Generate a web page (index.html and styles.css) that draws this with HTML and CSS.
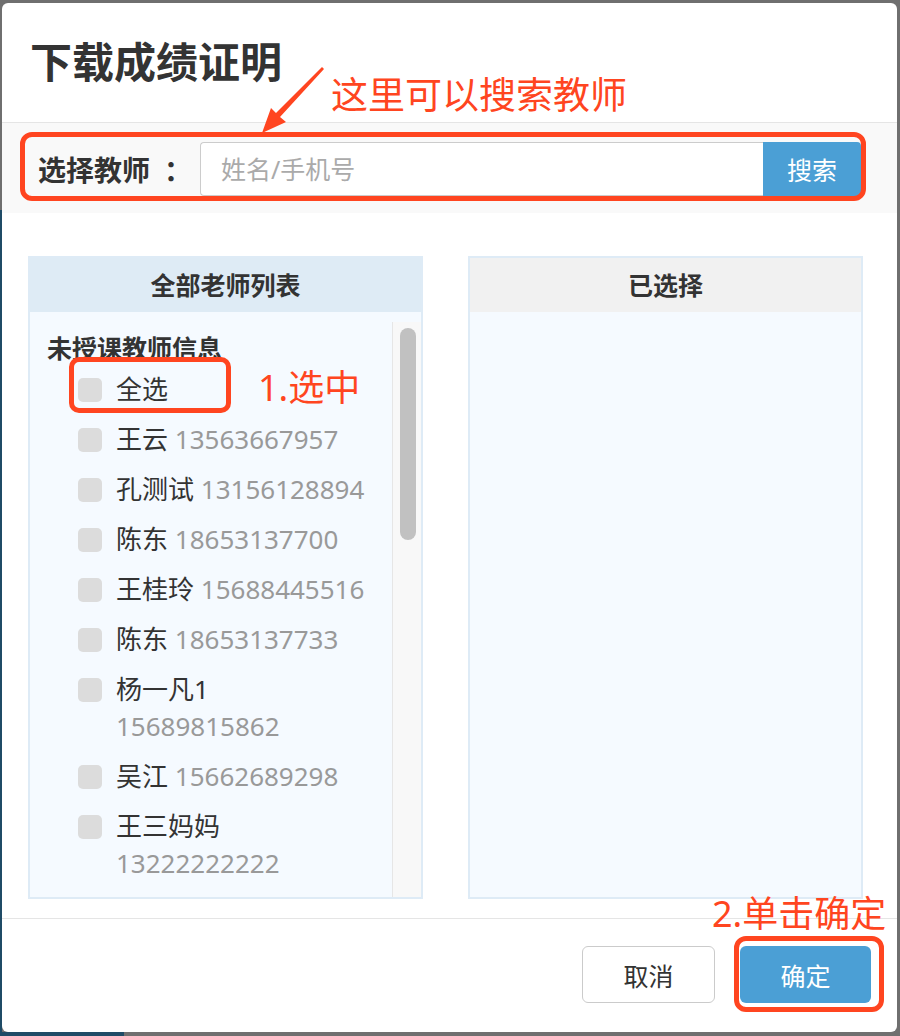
FILE: index.html
```html
<!DOCTYPE html>
<html lang="zh-CN">
<head>
    <meta charset="UTF-8">
    <title>下载成绩证明</title>
    <link rel="stylesheet" href="styles.css">
</head>
<body>

<div class="modal">
    <div class="modal-header">
        <h2 class="modal-title">下载成绩证明</h2>
    </div>

    <!-- 搜索教师 -->
    <div class="search-bar">
        <label class="search-label">选择教师<span class="colon">：</span></label>
        <input class="search-input" type="text" placeholder="姓名/手机号">
        <button class="search-btn">搜索</button>
    </div>

    <div class="modal-body">
        <div class="panel">
            <div class="panel-title">全部老师列表</div>
            <div class="panel-content">
                <div class="teacher-list">
                    <div class="group-name">未授课教师信息</div>
                    <div class="teacher"><span class="check"></span><span class="teacher-text">全选</span></div>
                    <div class="teacher"><span class="check"></span><span class="teacher-text">王云 <span class="phone">13563667957</span></span></div>
                    <div class="teacher"><span class="check"></span><span class="teacher-text">孔测试 <span class="phone">13156128894</span></span></div>
                    <div class="teacher"><span class="check"></span><span class="teacher-text">陈东 <span class="phone">18653137700</span></span></div>
                    <div class="teacher"><span class="check"></span><span class="teacher-text">王桂玲 <span class="phone">15688445516</span></span></div>
                    <div class="teacher"><span class="check"></span><span class="teacher-text">陈东 <span class="phone">18653137733</span></span></div>
                    <div class="teacher"><span class="check"></span><span class="teacher-text">杨一凡1 <span class="phone">15689815862</span></span></div>
                    <div class="teacher"><span class="check"></span><span class="teacher-text">吴江 <span class="phone">15662689298</span></span></div>
                    <div class="teacher"><span class="check"></span><span class="teacher-text">王三妈妈 <span class="phone">13222222222</span></span></div>
                </div>
                <div class="scrollbar"><div class="scroll-thumb"></div></div>
            </div>
        </div>
        <div class="panel">
            <div class="panel-title panel-title-gray">已选择</div>
            <div class="panel-content"></div>
        </div>
    </div>

    <div class="modal-footer">
        <button class="btn btn-default">取消</button>
        <button class="btn btn-primary">确定</button>
    </div>
</div>

<!-- 标注 -->
<div class="mark mark-search"></div>
<div class="mark mark-all"></div>
<div class="mark mark-ok"></div>
<div class="note note-search">这里可以搜索教师</div>
<div class="note note-step1">1.选中</div>
<div class="note note-step2">2.单击确定</div>
<svg class="mark-arrow" width="900" height="1036" viewBox="0 0 900 1036">
    <polygon fill="#ff4520" points="262,133 271,108 276,113 322,67 324,69 280,117 286,122"/>
</svg>

</body>
</html>
```

FILE: styles.css
```css
* {
    box-sizing: border-box;
}
html, body {
    margin: 0;
    height: 1036px;
    overflow: hidden;
}
body {
    padding: 3px 0 0 2px;
    font-family: "Noto Sans", "Noto Sans CJK SC", sans-serif;
    color: #333;
    /* 遮罩后面的页面 */
    background:
        linear-gradient(#1f4b66, #1f4b66) 0 1032px / 124px 4px no-repeat,
        linear-gradient(#1f4b66, #1f4b66) 0 210px / 2px 830px no-repeat,
        #6f6f6f;
}
.modal {
    width: 895px;
    height: 1029px;
    background-color: #fff;
    border-radius: 6px;
    display: flex;
    flex-direction: column;
    overflow: hidden;
}
.modal-header {
    height: 120px;
    padding: 38px 0 0 28px;
    border-bottom: 1px solid #e5e5e5;
}
.modal-title {
    margin: 0;
    font-size: 42px;
    line-height: 42px;
    font-weight: bold;
    color: #333;
}
/* 搜索栏 */
.search-bar {
    height: 90px;
    display: flex;
    align-items: center;
    padding: 2px 36px 0 36px;
    background-color: #f9f9f9;
}
.search-label {
    width: 162px;
    flex: none;
    font-size: 28px;
    font-weight: bold;
}
.colon {
    margin-left: 14px;
}
.search-input {
    flex: 1;
    height: 54px;
    padding: 0 20px;
    border: 1px solid #ccc;
    border-right: 0;
    border-radius: 4px 0 0 4px;
    font-family: inherit;
    font-size: 25px;
    outline: none;
}
.search-input::placeholder {
    color: #aaa;
}
.search-btn {
    width: 98px;
    height: 54px;
    border: 0;
    border-radius: 0 4px 4px 0;
    background-color: #4b9fd5;
    color: #fff;
    font-family: inherit;
    font-size: 25px;
}
/* 两个列表 */
.modal-body {
    height: 705px;
    display: flex;
    gap: 45px;
    padding: 43px 34px 19px 26px;
}
.panel {
    width: 395px;
    height: 643px;
    border: 2px solid #deebf6;
    background-color: #f5faff;
    display: flex;
    flex-direction: column;
}
.panel-title {
    height: 54px;
    line-height: 54px;
    text-align: center;
    font-size: 25px;
    font-weight: bold;
    background-color: #deebf5;
}
.panel-title-gray {
    background-color: #f1f1f1;
}
.panel-content {
    flex: 1;
    display: flex;
    padding-top: 10px;
    overflow: hidden;
}
.teacher-list {
    flex: 1;
    padding: 8px 20px 0 17px;
    overflow: hidden;
}
.group-name {
    font-size: 25px;
    line-height: 37px;
    font-weight: bold;
    margin-bottom: 4px;
}
.teacher {
    display: flex;
    padding-left: 31px;
    margin-bottom: 13px;
    font-size: 26px;
    line-height: 37px;
}
.check {
    flex: none;
    width: 24px;
    height: 24px;
    margin: 6.5px 14px 0 0;
    border-radius: 5px;
    background-color: #dcdcdc;
}
.phone {
    color: #999;
}
.scrollbar {
    width: 29px;
    flex: none;
    border-left: 1px solid #e6e6e6;
    background-color: #f8f8f8;
}
.scroll-thumb {
    width: 16px;
    height: 212px;
    margin: 6px 0 0 7px;
    border-radius: 8px;
    background-color: #c1c1c1;
}
/* 底部按钮 */
.modal-footer {
    flex: 1;
    display: flex;
    justify-content: flex-end;
    gap: 25px;
    padding: 27px 26px 0 0;
    border-top: 1px solid #e5e5e5;
}
.btn {
    height: 57px;
    border-radius: 6px;
    font-family: inherit;
    font-size: 25px;
}
.btn-default {
    width: 133px;
    border: 1.5px solid #cbcbcb;
    background-color: #fff;
    color: #333;
}
.btn-primary {
    width: 131px;
    border: 0;
    background-color: #4b9fd5;
    color: #fff;
}
/* 红色标注 */
.mark {
    position: absolute;
    border: 5px solid #ff4520;
    border-radius: 12px;
}
.mark-search {
    left: 20px;
    top: 132px;
    width: 846px;
    height: 69px;
}
.mark-all {
    left: 69px;
    top: 357px;
    width: 162px;
    height: 56px;
    border-radius: 10px;
}
.mark-ok {
    left: 734px;
    top: 936px;
    width: 150px;
    height: 76px;
}
.note {
    position: absolute;
    color: #ff4520;
    font-size: 37px;
    line-height: 40px;
    white-space: nowrap;
}
.note-search {
    left: 331px;
    top: 75px;
}
.note-step1 {
    left: 258px;
    top: 368px;
    font-size: 36px;
}
.note-step2 {
    left: 712px;
    top: 894px;
    font-size: 36px;
}
.mark-arrow {
    position: absolute;
    left: 0;
    top: 0;
    pointer-events: none;
}
```
